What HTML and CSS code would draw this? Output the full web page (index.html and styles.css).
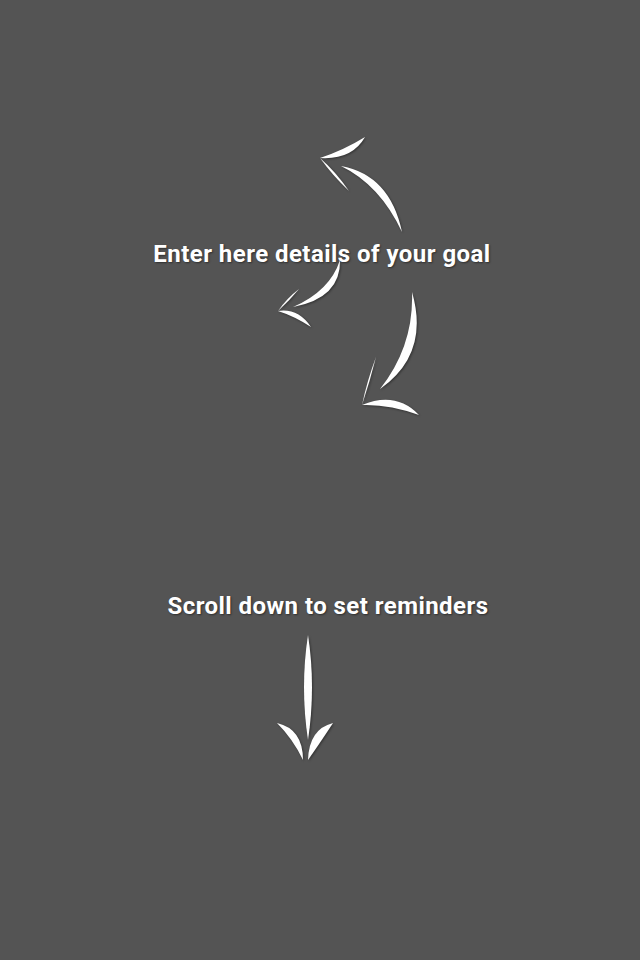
FILE: index.html
```html
<!DOCTYPE html>
<html lang="en">
<head>
  <meta charset="UTF-8" />
  <meta name="viewport" content="width=device-width, initial-scale=1.0"/>
  <title>Goal Tips</title>
  <link rel="stylesheet" href="styles.css">
</head>
<body>
  <div class="overlay">
    <!-- Goal details hint -->
    <p class="hint hint-goal">Enter here details of your goal</p>

    <!-- Reminders hint -->
    <p class="hint hint-remind">Scroll down to set reminders</p>

    <!-- hand drawn arrows -->
    <svg class="arrows" width="640" height="960" viewBox="0 0 640 960">
      <!-- up-left arrow -->
      <path d="M341 166 Q390 175 402 232 Q380 185 341 166 Z"/>
      <path d="M320 158 Q352 160 365 137 Q344 150 320 158 Z"/>
      <path d="M320 158 Q336 172 349 191 Q333 176 320 158 Z"/>

      <!-- small down-left arrow -->
      <path d="M340 260 Q341 298 293 307 Q330 291 340 260 Z"/>
      <path d="M278 311 Q290 300 299 289 Q287 298 278 311 Z"/>
      <path d="M278 311 Q298 308 311 327 Q294 316 278 311 Z"/>

      <!-- big down-left arrow -->
      <path d="M412 292 Q430 354 380 389 Q414 346 412 292 Z"/>
      <path d="M362 405 Q370 381 376 357 Q367 381 362 405 Z"/>
      <path d="M362 405 Q396 391 419 415 Q389 404 362 405 Z"/>

      <!-- down arrow -->
      <path d="M308 635 Q316 687 308 740 Q300 687 308 635 Z"/>
      <path d="M277 723 Q303 729 303 760 Q293 739 277 723 Z"/>
      <path d="M333 723 Q309 729 308 760 Q322 740 333 723 Z"/>
    </svg>
  </div>
</body>
</html>
```

FILE: styles.css
```css
body {
  margin: 0;
  background: #545454;
  font-family: Roboto, 'Noto Sans', sans-serif;
  color: #fff;
}

.overlay {
  position: relative;
  width: 640px;
  height: 960px;
  display: flex;
  flex-direction: column;
}

.hint {
  margin: 0;
  font-size: 24px;
  line-height: 28px;
  font-weight: bold;
  letter-spacing: 0.45px;
  text-align: center;
  text-shadow: 1px 1px 2px rgba(0, 0, 0, 0.45);
}

.hint-goal {
  margin-top: 240px;
  padding-left: 4px;
}

.hint-remind {
  margin-top: 324px;
  padding-left: 16px;
}

.arrows {
  position: absolute;
  top: 0;
  left: 0;
  pointer-events: none;
  fill: #fff;
  filter: drop-shadow(1px 1px 1px rgba(0, 0, 0, 0.4));
}
```
